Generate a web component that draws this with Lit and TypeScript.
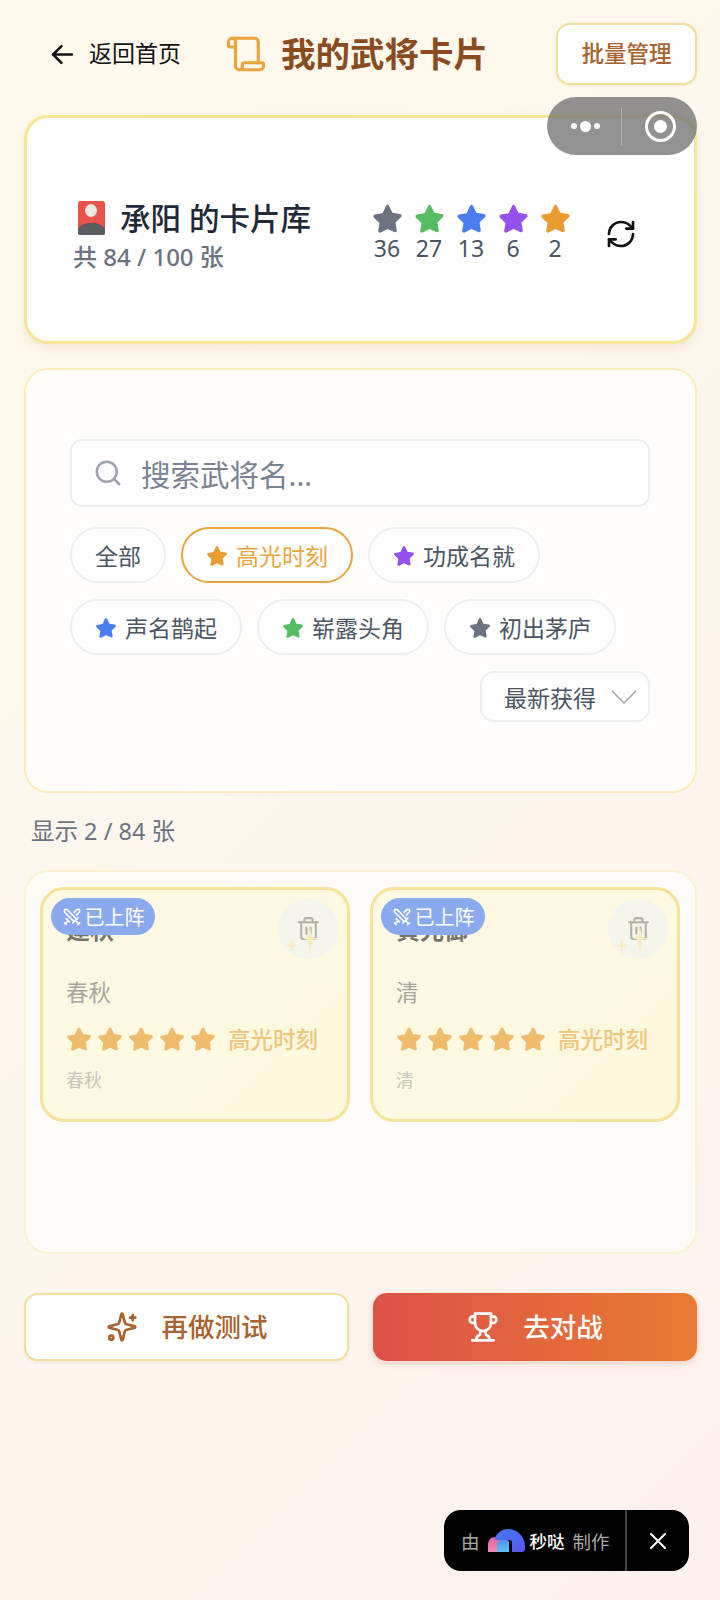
import { LitElement, html, css, svg } from "lit";
import { customElement } from "lit/decorators.js";

const STAR = "M12 2.2c.5 0 1 .3 1.2.8l2.6 5.4 5.9.9c1.1.2 1.6 1.6.8 2.4l-4.3 4.2 1 5.9c.2 1.1-1 2-2 1.4L12 20.9l-5.2 2.7c-1 .6-2.2-.3-2-1.4l1-5.9-4.3-4.2c-.8-.8-.3-2.2.8-2.4l5.9-.9L10.8 3c.2-.5.7-.8 1.2-.8z";

const star = (color: string, size: number) => html`<svg
  class="star"
  style="width:${size}px;height:${size}px"
  viewBox="0 0 24 24"
  fill=${color}
><path d=${STAR} /></svg>`;

const stroke = (size: number, color: string, width: number, body: unknown) => html`<svg
  style="width:${size}px;height:${size}px;flex:none"
  viewBox="0 0 24 24"
  fill="none"
  stroke=${color}
  stroke-width=${width}
  stroke-linecap="round"
  stroke-linejoin="round"
>${body}</svg>`;

const scrollIcon = svg`<path d="M19 17V5a2 2 0 0 0-2-2H4"/><path d="M8 21h12a2 2 0 0 0 2-2v-1a1 1 0 0 0-1-1H11a1 1 0 0 0-1 1v1a2 2 0 1 1-4 0V5a2 2 0 1 0-4 0v2a1 1 0 0 0 1 1h3"/>`;
const refreshIcon = svg`<path d="M3 12a9 9 0 0 1 9-9 9.75 9.75 0 0 1 6.74 2.74L21 8"/><path d="M21 3v5h-5"/><path d="M21 12a9 9 0 0 1-9 9 9.75 9.75 0 0 1-6.74-2.74L3 16"/><path d="M8 16H3v5"/>`;
const searchIcon = svg`<circle cx="11" cy="11" r="8"/><path d="m21 21-4.3-4.3"/>`;
const trashIcon = svg`<path d="M3 6h18"/><path d="M19 6v14c0 1-1 2-2 2H7c-1 0-2-1-2-2V6"/><path d="M8 6V4c0-1 1-2 2-2h4c1 0 2 1 2 2v2"/><path d="M10 11v6"/><path d="M14 11v6"/>`;
const swordsIcon = svg`<path d="M14.5 17.5 3 6V3h3l11.5 11.5"/><path d="m13 19 6-6"/><path d="m16 16 4 4"/><path d="m19 21 2-2"/><path d="M14.5 6.5 18 3h3v3l-3.5 3.5"/><path d="m5 14 4 4"/><path d="m7 17-3 3"/><path d="m3 19 2 2"/>`;
const sparkleIcon = svg`<path d="M9.937 15.5A2 2 0 0 0 8.5 14.063l-6.135-1.582a.5.5 0 0 1 0-.962L8.5 9.936A2 2 0 0 0 9.937 8.5l1.582-6.135a.5.5 0 0 1 .963 0L14.063 8.5A2 2 0 0 0 15.5 9.937l6.135 1.581a.5.5 0 0 1 0 .964L15.5 14.063a2 2 0 0 0-1.437 1.437l-1.582 6.135a.5.5 0 0 1-.963 0z"/><path d="M20 3v4"/><path d="M22 5h-4"/><circle cx="4" cy="20" r="1.5"/>`;
const trophyIcon = svg`<path d="M6 9H4.5a2.5 2.5 0 0 1 0-5H6"/><path d="M18 9h1.5a2.5 2.5 0 0 0 0-5H18"/><path d="M4 22h16"/><path d="M10 14.66V17c0 .55-.47.98-.97 1.21C7.85 18.75 7 20.24 7 22"/><path d="M14 14.66V17c0 .55.47.98.97 1.21C16.15 18.75 17 20.24 17 22"/><path d="M18 2H6v7a6 6 0 0 0 12 0V2Z"/>`;

const GRAY = "#6b7280";
const GREEN = "#55bd63";
const BLUE = "#4a7df0";
const PURPLE = "#9351ee";
const ORANGE = "#e99b2f";

const stats = [
  { color: GRAY, n: 36 },
  { color: GREEN, n: 27 },
  { color: BLUE, n: 13 },
  { color: PURPLE, n: 6 },
  { color: ORANGE, n: 2 },
];

const cards = [
  { name: "建秋", era: "春秋" },
  { name: "黄光御", era: "清" },
];

@customElement("app-root")
export class AppRoot extends LitElement {
  static styles = css`
    :host {
      display: block;
      position: relative;
      width: 720px;
      height: 1600px;
      overflow: hidden;
      background: linear-gradient(135deg, #fffaec 0%, #fdf6ee 50%, #fdf1ed 100%);
      font-family: "Noto Sans", "Noto Sans CJK SC", sans-serif;
      color: #1f2937;
    }
    * {
      box-sizing: border-box;
    }
    .page {
      padding: 23px 23px 0 24px;
    }
    .header {
      display: flex;
      align-items: center;
      height: 62px;
    }
    .back {
      display: flex;
      align-items: center;
      gap: 14px;
      margin-left: 26px;
      width: 175px;
      font-size: 23px;
      color: #111;
    }
    .back span,
    .batch span,
    .action span {
      padding-bottom: 4px;
    }
    .title {
      display: flex;
      align-items: center;
      gap: 14px;
      font-size: 34.5px;
      font-weight: 700;
      color: #8a4b20;
      line-height: 1;
    }
    .batch {
      margin-left: auto;
      width: 141px;
      height: 62px;
      display: flex;
      align-items: center;
      justify-content: center;
      background: #fff;
      border: 2px solid #f1df9a;
      border-radius: 14px;
      font-size: 22.5px;
      font-weight: 500;
      color: #a8632f;
      box-shadow: 0 1px 3px rgba(180, 150, 60, 0.15);
    }
    .capsule {
      position: absolute;
      left: 547px;
      top: 97px;
      width: 150px;
      height: 58px;
      border-radius: 29px;
      background: rgba(110, 110, 110, 0.75);
      display: flex;
      align-items: center;
    }
    .dots {
      width: 74px;
      display: flex;
      align-items: center;
      justify-content: center;
      gap: 3px;
      padding-left: 2px;
    }
    .dots i {
      width: 6px;
      height: 6px;
      border-radius: 50%;
      background: #fff;
    }
    .dots i:nth-child(2) {
      width: 11px;
      height: 11px;
    }
    .capsule-line {
      width: 1px;
      height: 37px;
      background: rgba(255, 255, 255, 0.35);
    }
    .capsule-ring {
      margin-left: 23px;
      width: 31px;
      height: 31px;
      border-radius: 50%;
      border: 3px solid #fff;
      display: flex;
      align-items: center;
      justify-content: center;
    }
    .capsule-ring i {
      width: 13px;
      height: 13px;
      border-radius: 50%;
      background: #fff;
    }
    .summary {
      margin-top: 30px;
      height: 229px;
      background: #fff;
      border: 3px solid #f6e594;
      border-radius: 24px;
      box-shadow: 0 3px 8px rgba(150, 120, 50, 0.14);
      display: flex;
      align-items: center;
      padding: 6px 0 0 46px;
    }
    .owner {
      width: 299px;
      padding-top: 10px;
    }
    .owner-name {
      display: flex;
      align-items: center;
      gap: 15px;
      font-size: 30.5px;
      font-weight: 500;
      line-height: 36px;
      color: #1f2937;
      padding-left: 5px;
    }
    .owner-count {
      margin-top: 3px;
      font-size: 24px;
      font-weight: 500;
      line-height: 36px;
      color: #6b7280;
    }
    .stats {
      display: flex;
      gap: 12px;
    }
    .stat {
      width: 30px;
      display: flex;
      flex-direction: column;
      align-items: center;
      font-size: 23px;
      line-height: 30px;
      color: #4b5563;
    }
    .star {
      display: block;
      flex: none;
    }
    .refresh {
      margin-left: 35px;
      margin-top: 3px;
      display: flex;
    }
    .filters {
      margin-top: 24px;
      height: 425px;
      background: rgba(255, 255, 255, 0.8);
      border: 2px solid #fbeeb9;
      border-radius: 24px;
      padding: 69px 45px 0 44px;
    }
    .search {
      height: 68px;
      display: flex;
      align-items: center;
      gap: 18px;
      padding-left: 21px;
      background: #fff;
      border: 2px solid #ecedef;
      border-radius: 12px;
      font-size: 29.5px;
      color: #7a8393;
    }
    .chips {
      margin-top: 20px;
      display: flex;
      flex-wrap: wrap;
      gap: 16px 15px;
    }
    .chip {
      height: 56px;
      padding: 0 23px;
      display: flex;
      align-items: center;
      gap: 8px;
      background: #fff;
      border: 2px solid #eeeff1;
      border-radius: 28px;
      font-size: 23px;
      color: #4b5563;
    }
    .chip.active {
      border-color: #e8a53e;
      color: #e8a53e;
    }
    .sort-row {
      margin-top: 16px;
      display: flex;
      justify-content: flex-end;
    }
    .sort {
      width: 170px;
      height: 51px;
      padding-left: 22px;
      display: flex;
      align-items: center;
      gap: 15px;
      background: #fff;
      border: 2px solid #eeeff1;
      border-radius: 14px;
      font-size: 23px;
      color: #4b5563;
    }
    .shown {
      margin: 23px 0 0 7px;
      height: 30px;
      line-height: 30px;
      font-size: 23.5px;
      color: #6b7280;
    }
    .gallery {
      margin-top: 24px;
      height: 384px;
      background: rgba(255, 255, 255, 0.6);
      border: 2px solid #fcf2d2;
      border-radius: 24px;
      padding: 15px 14px;
      display: grid;
      grid-template-columns: 310px 310px;
      column-gap: 20px;
      align-items: start;
    }
    .tile {
      position: relative;
      height: 235px;
      background: linear-gradient(135deg, #fef9e3, #fef8df);
      border: 3px solid #f6e399;
      border-radius: 24px;
      padding: 24px 0 0 23px;
    }
    .badge {
      position: absolute;
      left: 8px;
      top: 8px;
      width: 104px;
      height: 37px;
      display: flex;
      align-items: center;
      justify-content: center;
      gap: 3px;
      border-radius: 19px;
      background: #8aa9ee;
      color: #fff;
      font-size: 20px;
    }
    .trash {
      position: absolute;
      right: 9px;
      top: 9px;
      width: 60px;
      height: 60px;
      border-radius: 50%;
      background: rgba(243, 243, 238, 0.85);
      display: flex;
      align-items: center;
      justify-content: center;
      padding-bottom: 2px;
    }
    .glint {
      position: absolute;
      left: 6px;
      bottom: 4px;
    }
    .tile-name {
      font-size: 24px;
      font-weight: 700;
      line-height: 32px;
      color: #77756d;
    }
    .tile-era {
      margin-top: 31px;
      font-size: 22.5px;
      line-height: 32px;
      color: #a6a69f;
    }
    .tile-rank {
      margin-top: 13px;
      display: flex;
      align-items: center;
      gap: 5px;
      height: 32px;
      font-size: 22.5px;
      font-weight: 500;
      color: #efc67e;
    }
    .tile-rank span {
      margin-left: 7px;
    }
    .tile-foot {
      margin-top: 14px;
      font-size: 18px;
      line-height: 24px;
      color: #c6c6bf;
    }
    .actions {
      margin-top: 39px;
      display: grid;
      grid-template-columns: 325px 324px;
      gap: 24px;
    }
    .action {
      height: 68px;
      display: flex;
      align-items: center;
      justify-content: center;
      gap: 24px;
      border-radius: 14px;
      font-size: 26.5px;
      font-weight: 500;
    }
    .action.ghost {
      background: #fff;
      border: 2px solid #f1df9a;
      color: #a8632f;
      box-shadow: 0 1px 3px rgba(180, 150, 60, 0.15);
    }
    .action.hot {
      background: linear-gradient(90deg, #dc5249, #e87a32);
      color: #fff;
      box-shadow: 0 3px 6px rgba(200, 90, 50, 0.2);
    }
    .maker {
      position: absolute;
      left: 444px;
      top: 1510px;
      width: 245px;
      height: 61px;
      border-radius: 17px;
      background: #000;
      display: flex;
      align-items: center;
      font-size: 18.5px;
      color: #a9a9a9;
    }
    .maker-text {
      width: 181px;
      display: flex;
      align-items: center;
      padding-left: 17px;
    }
    .maker-logo {
      margin: 0 5px 0 8px;
      flex: none;
    }
    .maker-brand {
      color: #fff;
      font-weight: 500;
      margin-right: 8px;
      font-size: 17.5px;
    }
    .maker-line {
      width: 2px;
      height: 61px;
      background: #444;
    }
    .maker-close {
      flex: 1;
      display: flex;
      justify-content: center;
    }
  `;

  render() {
    return html`
      <div class="page">
        <header class="header">
          <div class="back">
            <svg width="25" height="25" viewBox="0 0 24 24" fill="none" stroke="#111" stroke-width="2.4" stroke-linecap="round" stroke-linejoin="round">
              <path d="M21 12H3" /><path d="M11 4l-8 8 8 8" />
            </svg>
            <span>返回首页</span>
          </div>
          <div class="title">${stroke(42, "#e9a53c", 1.8, scrollIcon)}我的武将卡片</div>
          <div class="batch"><span>批量管理</span></div>
        </header>

        <section class="summary">
          <div class="owner">
            <div class="owner-name">
              <svg width="27" height="34" viewBox="0 0 27 34">
                <rect width="27" height="34" rx="2.5" fill="#e8524a" />
                <path d="M0 27c7-7 20-7 27 0v5a2 2 0 0 1-2 2H2a2 2 0 0 1-2-2z" fill="#5c5c60" />
                <ellipse cx="13" cy="9.5" rx="6" ry="6.5" fill="#f1e8e4" />
              </svg>
              <span>承阳 的卡片库</span>
            </div>
            <div class="owner-count">共 84 / 100 张</div>
          </div>
          <div class="stats">
            ${stats.map((s) => html`<div class="stat">${star(s.color, 31)}<span>${s.n}</span></div>`)}
          </div>
          <div class="refresh">${stroke(32, "#111", 2, refreshIcon)}</div>
        </section>

        <section class="filters">
          <div class="search">${stroke(30, "#9ca3af", 2, searchIcon)}<span>搜索武将名...</span></div>
          <div class="chips">
            <div class="chip">全部</div>
            <div class="chip active">${star(ORANGE, 22)}高光时刻</div>
            <div class="chip">${star(PURPLE, 22)}功成名就</div>
            <div class="chip">${star(BLUE, 22)}声名鹊起</div>
            <div class="chip">${star(GREEN, 22)}崭露头角</div>
            <div class="chip">${star(GRAY, 22)}初出茅庐</div>
          </div>
          <div class="sort-row">
            <div class="sort">
              最新获得
              <svg width="26" height="14" viewBox="0 0 26 14" fill="none" stroke="#9ca3af" stroke-width="1.5">
                <path d="M1 1l12 12L25 1" />
              </svg>
            </div>
          </div>
        </section>

        <div class="shown">显示 2 / 84 张</div>

        <section class="gallery">
          ${cards.map(
            (c) => html`
              <article class="tile">
                <div class="tile-name">${c.name}</div>
                <div class="tile-era">${c.era}</div>
                <div class="tile-rank">
                  ${[0, 1, 2, 3, 4].map(() => star("#efbc6d", 26))}
                  <span>高光时刻</span>
                </div>
                <div class="tile-foot">${c.era}</div>
                <div class="badge">${stroke(20, "#fff", 2, swordsIcon)}已上阵</div>
                <div class="trash">
                  <svg class="glint" width="36" height="34" viewBox="0 0 36 34" fill="#f7ecc0">
                    <path d="M8 18l1.5 5 5 1.5-5 1.5L8 31l-1.5-5-5-1.5 5-1.5z" />
                    <path d="M26 6l2.2 10 5 1.5-5 1.5L26 33l-2.2-14-5-1.5 5-1.5z" />
                  </svg>
                  ${stroke(25, "#b4b0a2", 2, trashIcon)}
                </div>
              </article>
            `
          )}
        </section>

        <div class="actions">
          <div class="action ghost">${stroke(32, "#a8632f", 2, sparkleIcon)}<span>再做测试</span></div>
          <div class="action hot">${stroke(32, "#fff", 2, trophyIcon)}<span>去对战</span></div>
        </div>
      </div>

      <div class="capsule">
        <div class="dots"><i></i><i></i><i></i></div>
        <div class="capsule-line"></div>
        <div class="capsule-ring"><i></i></div>
      </div>

      <div class="maker">
        <div class="maker-text">
          由
          <svg class="maker-logo" width="37" height="23" viewBox="0 0 37 23">
            <defs>
              <linearGradient id="mk" x1="0" y1="0" x2="1" y2="1">
                <stop offset="0" stop-color="#3f7cf5" />
                <stop offset="1" stop-color="#5b54ec" />
              </linearGradient>
              <linearGradient id="mk2" x1="0" y1="0" x2="0" y2="1">
                <stop offset="0" stop-color="#ef5f9a" />
                <stop offset="1" stop-color="#f08ab8" />
              </linearGradient>
              <linearGradient id="mk3" x1="0" y1="0" x2="0" y2="1">
                <stop offset="0" stop-color="#4f8ff5" />
                <stop offset="1" stop-color="#5fc0f2" />
              </linearGradient>
            </defs>
            <path d="M0 23v-7c0-5 3-8 7-8s6 3 6 8v7z" fill="url(#mk2)" />
            <path d="M6 11C9 4 13 0 20 0c10 0 17 8 17 17v3a3 3 0 0 1-3 3H24v-9c0-2-1-3-3-3z" fill="url(#mk)" />
            <path d="M9 23v-7c0-3 2-5 5-5h5c1 0 2 1 2 3v9z" fill="url(#mk3)" />
          </svg>
          <span class="maker-brand">秒哒</span>
          制作
        </div>
        <div class="maker-line"></div>
        <div class="maker-close">
          <svg width="18" height="18" viewBox="0 0 18 18" stroke="#fff" stroke-width="2" stroke-linecap="round">
            <path d="M2 2l14 14M16 2L2 16" />
          </svg>
        </div>
      </div>
    `;
  }
}
